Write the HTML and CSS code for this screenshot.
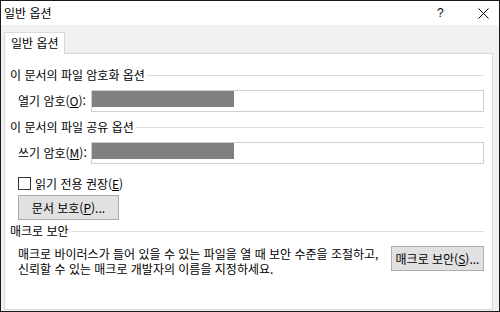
FILE: index.html
```html
<!DOCTYPE html>
<html lang="ko">
<head>
<meta charset="utf-8">
<link rel="stylesheet" href="styles.css">
</head>
<body>
<div class="window">
  <div class="titlebar">
    <span class="title">일반 옵션</span>
    <span class="help">?</span>
    <span class="close"><svg width="11" height="11" viewBox="0 0 11 11"><path d="M0.5 0.5 L10.5 10.5 M10.5 0.5 L0.5 10.5" stroke="#000" stroke-width="1" fill="none"/></svg></span>
  </div>
  <div class="body">
    <div class="tabs"><div class="tab">일반 옵션</div></div>
    <div class="panel">
      <div class="section-head h1"><span>이 문서의 파일 암호화 옵션</span><i class="rule"></i></div>
      <div class="field r1">
        <span class="label">열기 암호(<u>O</u>):</span>
        <div class="input"><div class="mask"></div></div>
      </div>
      <div class="section-head h2"><span>이 문서의 파일 공유 옵션</span><i class="rule"></i></div>
      <div class="field r2">
        <span class="label">쓰기 암호(<u>M</u>):</span>
        <div class="input"><div class="mask"></div></div>
      </div>
      <div class="check"><span class="box"></span><span>읽기 전용 권장(<u>E</u>)</span></div>
      <div class="btn protect">문서 보호(<u>P</u>)...</div>
      <div class="section-head h3"><span>매크로 보안</span><i class="rule"></i></div>
      <div class="macro">
        <div class="desc">
          <span class="line">매크로 바이러스가 들어 있을 수 있는 파일을 열 때 보안 수준을 조절하고,</span>
          <span class="line">신뢰할 수 있는 매크로 개발자의 이름을 지정하세요.</span>
        </div>
        <div class="btn macro-btn">매크로 보안(<u>S</u>)...</div>
      </div>
    </div>
  </div>
</div>
</body>
</html>
```

FILE: styles.css
```css
* { box-sizing: border-box; }
html, body { margin: 0; padding: 0; }
body {
  width: 500px;
  height: 312px;
  overflow: hidden;
  font-family: "Noto Sans CJK KR", "Noto Sans", sans-serif;
  font-size: 12px;
  color: #000;
}
.window {
  width: 500px;
  height: 312px;
  border: 1px solid #1a1a1a;
  display: flex;
  flex-direction: column;
  background: #f0f0f0;
}
.titlebar {
  height: 24px;
  background: #fff;
  display: flex;
  align-items: center;
  padding-left: 3px;
  flex: none;
}
.title { font-size: 12px; line-height: 16px; flex: 1; }
.help { font-size: 12px; width: 14px; margin-right: 27px; font-family: "Liberation Sans", sans-serif; }
.close { width: 11px; margin-right: 10px; display: flex; }
.body {
  flex: 1;
  display: flex;
  flex-direction: column;
  padding: 7px 6px 1px 3px;
}
.tabs { display: flex; height: 22px; flex: none; }
.tab {
  width: 61px;
  height: 22px;
  background: #fff;
  border: 1px solid #d9d9d9;
  border-bottom: none;
  padding-left: 6px;
  font-size: 12px;
  line-height: 20px;
  position: relative;
  z-index: 1;
}
.panel {
  flex: 1;
  background: #fff;
  border: 1px solid #d9d9d9;
  margin-top: -1px;
  padding: 0 8px 0 5px;
  display: flex;
  flex-direction: column;
}
.section-head {
  display: flex;
  align-items: center;
  height: 16px;
  line-height: 16px;
  gap: 2px;
}
.rule { flex: 1; border-top: 1px solid #dcdcdc; }
.h1 { margin-top: 13px; }
.h2 { margin-top: 7px; }
.h3 { margin-top: 3px; }
.field { display: flex; align-items: center; padding-left: 8px; }
.r1 { margin-top: 7px; }
.r2 { margin-top: 7px; }
.label { width: 73px; flex: none; line-height: 16px; white-space: nowrap; }
.input {
  flex: 1;
  height: 22px;
  border: 1px solid #cfcfcf;
  background: #fff;
}
.mask { width: 142px; height: 16px; background: #808080; }
.check {
  display: flex;
  align-items: center;
  gap: 4px;
  margin-top: 11px;
  padding-left: 8px;
  height: 16px;
}
.box { width: 13px; height: 13px; border: 1px solid #333; background: #fff; }
.btn {
  background: #e1e1e1;
  border: 1px solid #adadad;
  display: flex;
  align-items: center;
  justify-content: center;
  height: 25px;
  white-space: nowrap;
}
.protect { width: 101px; margin-left: 8px; margin-top: 4px; }
.macro { display: flex; align-items: flex-start; margin-top: 7px; padding-left: 8px; }
.desc { flex: 1; margin-top: 0; display: flex; flex-direction: column; }
.line { display: block; height: 15px; line-height: 15px; white-space: nowrap; }
.macro-btn { width: 93px; flex: none; }
u { text-decoration: underline; text-underline-offset: 1px; }
```
